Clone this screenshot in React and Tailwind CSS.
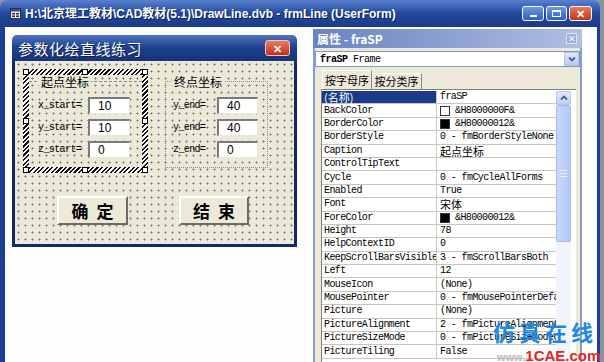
import React from "react";

const MONO = "[font-family:'Liberation_Mono','Noto_Sans_CJK_SC',monospace]";
const SANS = "[font-family:'Liberation_Sans','Noto_Sans_CJK_SC',sans-serif]";
const CJK = "[font-family:'Noto_Sans_CJK_SC','Liberation_Sans',sans-serif]";
const DOTS =
  "bg-[#ece9d8] [background-image:radial-gradient(circle,#6f6f6f_0.8px,transparent_1.2px)] [background-size:7px_7px]";
const HATCH =
  "[background-image:repeating-linear-gradient(135deg,#111_0px,#111_1.6px,#fff_1.6px,#fff_3.2px)]";

function Handle({ className }) {
  return <div className={"absolute w-[6px] h-[6px] bg-white border border-black " + className} />;
}

function TextBox({ value, w }) {
  return (
    <div
      className={
        "h-[17px] bg-white border-t-[2px] border-l-[2px] border-b border-r border-t-[#7a7a7a] border-l-[#7a7a7a] border-b-[#e8e6dc] border-r-[#e8e6dc] flex items-center pl-[8px] text-[12px] text-black " +
        SANS +
        " " +
        w
      }
    >
      {value}
    </div>
  );
}

function FieldRow({ label, value, lw, tw, pl }) {
  return (
    <div className={"flex items-center " + pl}>
      <div className={"text-[10px] tracking-[-0.6px] text-black whitespace-nowrap " + MONO + " " + lw}>{label}</div>
      <TextBox value={value} w={tw} />
    </div>
  );
}

function Btn({ children, w }) {
  return (
    <div
      className={
        "h-[29px] bg-[#ece9d8] border-t-2 border-l-2 border-t-white border-l-white border-b-2 border-r-2 border-b-[#6b6b6b] border-r-[#6b6b6b] flex items-center justify-center text-[17px] font-bold text-black tracking-[8px] pl-[8px] " +
        CJK +
        " " +
        w
      }
    >
      {children}
    </div>
  );
}

function Swatch({ color }) {
  return <span className={"inline-block w-[10px] h-[10px] border border-[#333] mr-[5px] shrink-0 " + color} />;
}

const rows = [
  { n: "(名称)", v: "fraSP", sel: true, cjkName: true },
  { n: "BackColor", v: "&H8000000F&", sw: "bg-white" },
  { n: "BorderColor", v: "&H80000012&", sw: "bg-black" },
  { n: "BorderStyle", v: "0 - fmBorderStyleNone" },
  { n: "Caption", v: "起点坐标", cjk: true },
  { n: "ControlTipText", v: "" },
  { n: "Cycle", v: "0 - fmCycleAllForms" },
  { n: "Enabled", v: "True" },
  { n: "Font", v: "宋体", cjk: true },
  { n: "ForeColor", v: "&H80000012&", sw: "bg-black" },
  { n: "Height", v: "78" },
  { n: "HelpContextID", v: "0" },
  { n: "KeepScrollBarsVisible", v: "3 - fmScrollBarsBoth" },
  { n: "Left", v: "12" },
  { n: "MouseIcon", v: "(None)" },
  { n: "MousePointer", v: "0 - fmMousePointerDefault" },
  { n: "Picture", v: "(None)" },
  { n: "PictureAlignment", v: "2 - fmPictureAlignmentCenter" },
  { n: "PictureSizeMode", v: "0 - fmPictureSizeModeClip" },
  { n: "PictureTiling", v: "False" },
];

function PropRow({ r }) {
  return (
    <div className="flex h-[13.4px] shrink-0">
      <div
        className={
          "w-[115px] shrink-0 border-r border-b border-[#c9c7bd] flex items-center pl-[2px] overflow-x-clip whitespace-nowrap " +
          (r.sel ? "bg-[#1c3a8a] text-white " : "bg-white text-black ")
        }
      >
        {r.cjkName ? (
          <span className={"text-[11px] leading-[12px] " + CJK}>{r.n}</span>
        ) : (
          <span className={"text-[10px] tracking-[-0.6px] leading-none " + MONO}>{r.n}</span>
        )}
      </div>
      <div className="w-[119px] shrink-0 border-b border-[#c9c7bd] bg-white flex items-center pl-[3px] overflow-x-clip whitespace-nowrap text-black">
        {r.sw && <Swatch color={r.sw} />}
        {r.cjk ? (
          <span className={"text-[11px] leading-[12px] " + CJK}>{r.v}</span>
        ) : (
          <span className={"text-[10px] tracking-[-0.6px] leading-none " + MONO}>{r.v}</span>
        )}
      </div>
    </div>
  );
}

export default function App() {
  return (
    <div className="w-[604px] h-[362px] overflow-hidden relative bg-[#8b919b]">
      <div className="w-[600px] h-full flex flex-col">
        {/* outer title bar */}
        <div className="h-[27px] shrink-0 rounded-t-[7px] bg-gradient-to-b from-[#5a80cf] via-[#22489c] to-[#1b3b88] flex items-center pl-[10px] pr-[8px]">
          <svg width="11" height="11" viewBox="0 0 11 11" className="shrink-0">
            <rect x="0.5" y="0.5" width="10" height="10" fill="#e8e8e8" stroke="#333" />
            <rect x="1" y="1" width="9" height="2.5" fill="#2a4fa0" />
            <rect x="2" y="5" width="3" height="1.5" fill="#333" />
            <rect x="6" y="5" width="3" height="1.5" fill="#333" />
            <rect x="2" y="7.5" width="3" height="1.5" fill="#333" />
            <rect x="6" y="7.5" width="3" height="1.5" fill="#333" />
          </svg>
          <div className={"ml-[4px] text-white font-bold text-[12px] whitespace-nowrap [text-shadow:1px_1px_0_#0b1f55] " + SANS}>
            {"H:\\北京理工教材\\CAD教材(5.1)\\DrawLine.dvb - frmLine (UserForm)"}
          </div>
          <div className="ml-auto flex gap-[2px] items-center">
            <div className="w-[22px] h-[15px] rounded-[3px] border border-white bg-gradient-to-b from-[#6f95e3] to-[#2e5ccc] flex items-end justify-center pb-[3px]">
              <div className="w-[7px] h-[2px] bg-white" />
            </div>
            <div className="w-[21px] h-[15px] rounded-[3px] border border-white bg-gradient-to-b from-[#6f95e3] to-[#2e5ccc] flex items-center justify-center">
              <div className="w-[9px] h-[7px] border border-white border-t-2" />
            </div>
            <div className="w-[23px] h-[15px] rounded-[3px] border border-white bg-gradient-to-b from-[#e8795e] to-[#c23414] flex items-center justify-center text-white text-[11px] font-bold leading-none">
              ✕
            </div>
          </div>
        </div>

        {/* outer body */}
        <div className="flex-1 min-h-0 flex items-start bg-[#fdfdfd] border-l-[5px] border-r-[3px] border-[#1d3f91]">
          {/* user form */}
          <div className="w-[285px] mt-[8px] ml-[7px] shrink-0 flex flex-col rounded-t-[5px] overflow-hidden">
            <div className="h-[26px] bg-gradient-to-b from-[#4f74c0] via-[#1e3f8c] to-[#183476] flex items-center pl-[6px] pr-[7px]">
              <div className={"text-white text-[15px] leading-none tracking-[0.5px] [text-shadow:1px_1px_0_#0b1f55] " + CJK}>
                参数化绘直线练习
              </div>
              <div className="ml-auto w-[25px] h-[16px] rounded-[3px] border border-[#f3c8bb] bg-gradient-to-b from-[#ea7b62] to-[#c12e12] flex items-center justify-center text-white text-[11px] font-bold leading-none">
                ✕
              </div>
            </div>
            <div className={"h-[186px] border-x-[3px] border-b-[3px] border-[#13296b] pl-[8px] pt-[8px] " + DOTS}>
              <div className="flex items-start">
                {/* frame 1 (selected) */}
                <div className={"relative w-[125px] h-[104px] p-[6px] " + HATCH}>
                  <div className={"w-full h-full relative " + DOTS}>
                    <div className="pt-[6px]">
                      <div className="border-t border-dashed border-[#8a8a8a]" />
                    </div>
                    <div className={"absolute top-[0px] left-[10px] px-[2px] bg-[#ece9d8] text-[12px] leading-[13px] text-black " + CJK}>
                      起点坐标
                    </div>
                    <div className="pt-[15px] flex flex-col gap-[5px]">
                      <FieldRow label="x_start=" value="10" lw="w-[50px]" tw="w-[42px]" pl="pl-[9px]" />
                      <FieldRow label="y_start=" value="10" lw="w-[50px]" tw="w-[42px]" pl="pl-[9px]" />
                      <FieldRow label="z_start=" value="0" lw="w-[50px]" tw="w-[42px]" pl="pl-[9px]" />
                    </div>
                  </div>
                  <Handle className="left-0 top-0" />
                  <Handle className="left-[59px] top-0" />
                  <Handle className="right-0 top-0" />
                  <Handle className="left-0 top-[49px]" />
                  <Handle className="right-0 top-[49px]" />
                  <Handle className="left-0 bottom-0" />
                  <Handle className="left-[59px] bottom-0" />
                  <Handle className="right-0 bottom-0" />
                </div>
                {/* frame 2 */}
                <div className="relative ml-[17px] mt-[12px] w-[103px] h-[87px] border border-dotted border-[#8f8f8f]">
                  <div className={"absolute -top-[7px] left-[6px] px-[2px] bg-[#ece9d8] text-[12px] leading-[13px] text-black " + CJK}>
                    终点坐标
                  </div>
                  <div className="pt-[15px] flex flex-col gap-[5px]">
                    <FieldRow label="y_end=" value="40" lw="w-[44px]" tw="w-[41px]" pl="pl-[7px]" />
                    <FieldRow label="y_end=" value="40" lw="w-[44px]" tw="w-[41px]" pl="pl-[7px]" />
                    <FieldRow label="z_end=" value="0" lw="w-[44px]" tw="w-[41px]" pl="pl-[7px]" />
                  </div>
                </div>
              </div>
              <div className="flex mt-[23px] ml-[34px] gap-[51px]">
                <Btn w="w-[71px]">确定</Btn>
                <Btn w="w-[70px]">结束</Btn>
              </div>
            </div>
          </div>

          {/* properties window */}
          <div className="mt-[2px] ml-[16px] w-[269px] shrink-0 self-stretch flex flex-col bg-[#ece9d8] overflow-hidden">
            <div className="h-[19px] shrink-0 bg-gradient-to-r from-[#6a83c1] to-[#b0bfe2] flex items-center pl-[4px] pr-[5px]">
              <div className={"text-white font-bold text-[12px] leading-none " + CJK}>
                属性 - fraSP
              </div>
              <div className="ml-auto w-[11px] h-[11px] border border-[#dfe6f6] bg-[#9cb0dc] flex items-center justify-center text-white text-[9px] leading-none">
                ✕
              </div>
            </div>
            <div className="flex-1 flex flex-col border-x-2 border-[#8a9ccb] min-h-0">
              <div className="mt-[3px] h-[16px] bg-white border border-[#7f9db9] flex items-center pl-[4px]">
                <span className={"text-[10px] tracking-[-0.5px] text-black " + MONO}>
                  <b>fraSP</b> Frame
                </span>
                <div className="ml-auto w-[15px] h-[14px] bg-gradient-to-b from-[#dfe8fb] to-[#b6c9f1] border border-[#b0c2ea] flex items-center justify-center">
                  <svg width="8" height="6" viewBox="0 0 8 6">
                    <path d="M1 1.5 L4 4.5 L7 1.5" stroke="#4d6185" strokeWidth="1.8" fill="none" />
                  </svg>
                </div>
              </div>
              <div className="flex items-end mt-[3px] ml-[7px] h-[19px]">
                <div className={"h-[19px] w-[50px] border-t border-l border-r border-white border-r-[#888] bg-[#ece9d8] flex items-center justify-center text-[11px] text-black whitespace-nowrap " + CJK}>
                  按字母序
                </div>
                <div className={"h-[16px] w-[50px] border-t border-r border-white border-r-[#888] bg-[#ece9d8] flex items-center justify-center text-[11px] text-black whitespace-nowrap " + CJK}>
                  按分类序
                </div>
              </div>
              <div className="ml-[6px] w-[255px] flex-1 min-h-0 flex border-t border-l border-[#808080] bg-white pt-[1px] overflow-hidden">
                <div className="flex flex-col">
                  {rows.map((r) => (
                    <PropRow key={r.n} r={r} />
                  ))}
                </div>
                <div className="w-[15px] shrink-0 flex flex-col bg-[#f2f5fc]">
                  <div className="h-[14px] bg-gradient-to-b from-[#e0e9fd] to-[#bcd0f8] border border-[#b3c6ef] rounded-[2px] flex items-center justify-center">
                    <svg width="8" height="6" viewBox="0 0 8 6">
                      <path d="M1 4.5 L4 1.5 L7 4.5" stroke="#4d6185" strokeWidth="1.8" fill="none" />
                    </svg>
                  </div>
                  <div className="h-[137px] bg-gradient-to-r from-[#c7d7fb] to-[#b4c8f6] border border-[#a6bbec] rounded-[2px] flex flex-col items-center justify-center gap-[2px]">
                    <div className="w-[7px] h-[1px] bg-[#eef3ff]" />
                    <div className="w-[7px] h-[1px] bg-[#eef3ff]" />
                    <div className="w-[7px] h-[1px] bg-[#eef3ff]" />
                  </div>
                </div>
              </div>
            </div>
          </div>
        </div>
      </div>

      {/* watermark */}
      <div className={"absolute left-[493px] top-[320px] text-[22px] font-bold leading-none tracking-[4px] text-[#1f88de] " + CJK}>
        仿真在线
      </div>
      <div className={"absolute left-[497px] top-[348px] text-[15px] font-bold leading-none whitespace-nowrap " + SANS}>
        <span className="text-[#b9b9b9] text-[11px]">www.</span>
        <span className="text-[#e0261c]">1CAE.com</span>
      </div>
    </div>
  );
}
